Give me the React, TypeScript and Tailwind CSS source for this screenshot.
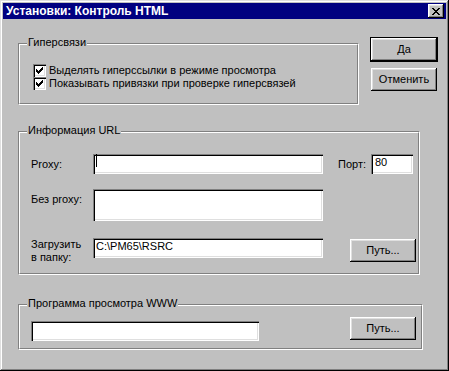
import type { ReactNode } from "react";

// Win95-style bevels
const sunken =
    "bg-white shadow-[inset_1px_1px_0_#808080,inset_2px_2px_0_#000,inset_-1px_-1px_0_#fff,inset_-2px_-2px_0_#dfdfdf]";
const raised =
    "bg-[#c0c0c0] shadow-[inset_-1px_-1px_0_#000,inset_1px_1px_0_#fff,inset_-2px_-2px_0_#808080,inset_2px_2px_0_#dfdfdf]";

const CHECK_ROWS = ["......x", ".....xx", "x...xxx", "xx.xxx.", "xxxxx..", ".xxx...", "..x...."];
const CLOSE_ROWS = ["xx....xx", ".xx..xx.", "..xxxx..", "...xx...", "..xxxx..", ".xx..xx.", "xx....xx"];

function Pixels({ rows }: { rows: string[] }) {
    return (
        <svg width={rows[0].length} height={rows.length} shapeRendering="crispEdges">
            {rows.flatMap((row, y) =>
                row.split("").map((c, x) =>
                    c === "x" ? <rect key={`${x}-${y}`} x={x} y={y} width={1} height={1} fill="#000" /> : null
                )
            )}
        </svg>
    );
}

function Group({ title, className, children }: { title: string; className: string; children: ReactNode }) {
    return (
        <div className={`relative border border-t-[#808080] border-l-[#808080] border-r-white border-b-white ${className}`}>
            <div className="h-full border border-t-white border-l-white border-r-[#808080] border-b-[#808080]">
                {children}
            </div>
            <span className="absolute left-[8px] -top-[8px] bg-[#c0c0c0] px-px leading-[13px]">{title}</span>
        </div>
    );
}

function Button({ label, isDefault }: { label: string; isDefault?: boolean }) {
    return (
        <div
            className={`${raised} w-[66px] h-[23px] flex items-center justify-center ${isDefault ? "outline-1 outline-black" : ""}`}
        >
            {label}
        </div>
    );
}

function Check({ label }: { label: string }) {
    return (
        <div className="flex items-center h-[13px]">
            <div className={`${sunken} w-[13px] h-[13px] flex items-center justify-center`}>
                <Pixels rows={CHECK_ROWS} />
            </div>
            <span className="ml-[3px] leading-[13px]">{label}</span>
        </div>
    );
}

export default function App() {
    return (
        <div className="w-[449px] h-[371px] p-[3px] bg-[#c0c0c0] text-black text-[11px] font-['Liberation_Sans',Arial,sans-serif] shadow-[inset_-1px_-1px_0_#000,inset_1px_1px_0_#dfdfdf,inset_-2px_-2px_0_#808080,inset_2px_2px_0_#fff]">
            {/* Title bar */}
            <div className="h-[16px] bg-[#000080] flex items-center justify-between pl-[3px] pr-[2px]">
                <span className="text-white font-bold text-[12px] leading-[16px]">Установки: Контроль HTML</span>
                <div className={`${raised} w-[16px] h-[14px] flex items-center justify-center`}>
                    <Pixels rows={CLOSE_ROWS} />
                </div>
            </div>

            <div className="pl-[15px]">
                {/* Top row: hyperlinks + OK/Cancel */}
                <div className="flex items-start mt-[19px]">
                    <Group title="Гиперсвязи" className="mt-[5px] w-[341px] h-[62px]">
                        <div className="pl-[13px] pt-[19px]">
                            <Check label="Выделять гиперссылки в режиме просмотра" />
                            <Check label="Показывать привязки при проверке гиперсвязей" />
                        </div>
                    </Group>
                    <div className="ml-[12px] flex flex-col gap-[7px]">
                        <Button label="Да" isDefault />
                        <Button label="Отменить" />
                    </div>
                </div>

                {/* URL info */}
                <Group title="Информация URL" className="mt-[26px] w-[402px] h-[144px]">
                    <div className="pl-[11px]">
                        <div className="flex items-center mt-[21px] h-[20px]">
                            <span className="w-[62px]">Proxy:</span>
                            <div className={`${sunken} w-[230px] h-[20px] pl-[3px]`}>
                                <div className="w-px h-[13px] bg-black" />
                            </div>
                            <span className="ml-[15px] w-[33px]">Порт:</span>
                            <div className={`${sunken} w-[42px] h-[20px] pl-[4px]`}>80</div>
                        </div>
                        <div className="flex items-start mt-[15px]">
                            <span className="w-[62px] pt-[4px] leading-[13px]">Без proxy:</span>
                            <div className={`${sunken} w-[230px] h-[32px]`} />
                        </div>
                        <div className="flex items-start mt-[17px]">
                            <span className="w-[62px] leading-[13px]">
                                Загрузить
                                <br />в папку:
                            </span>
                            <div className={`${sunken} w-[230px] h-[20px] pl-[3px]`}>C:\PM65\RSRC</div>
                            <div className="ml-[27px] mt-px">
                                <Button label="Путь..." />
                            </div>
                        </div>
                    </div>
                </Group>

                {/* WWW viewer */}
                <Group title="Программа просмотра WWW" className="mt-[29px] w-[405px] h-[46px]">
                    <div className="flex items-start pl-[11px] mt-[11px]">
                        <div className={`${sunken} w-[228px] h-[20px] mt-[4px]`} />
                        <div className="ml-[91px]">
                            <Button label="Путь..." />
                        </div>
                    </div>
                </Group>
            </div>
        </div>
    );
}
